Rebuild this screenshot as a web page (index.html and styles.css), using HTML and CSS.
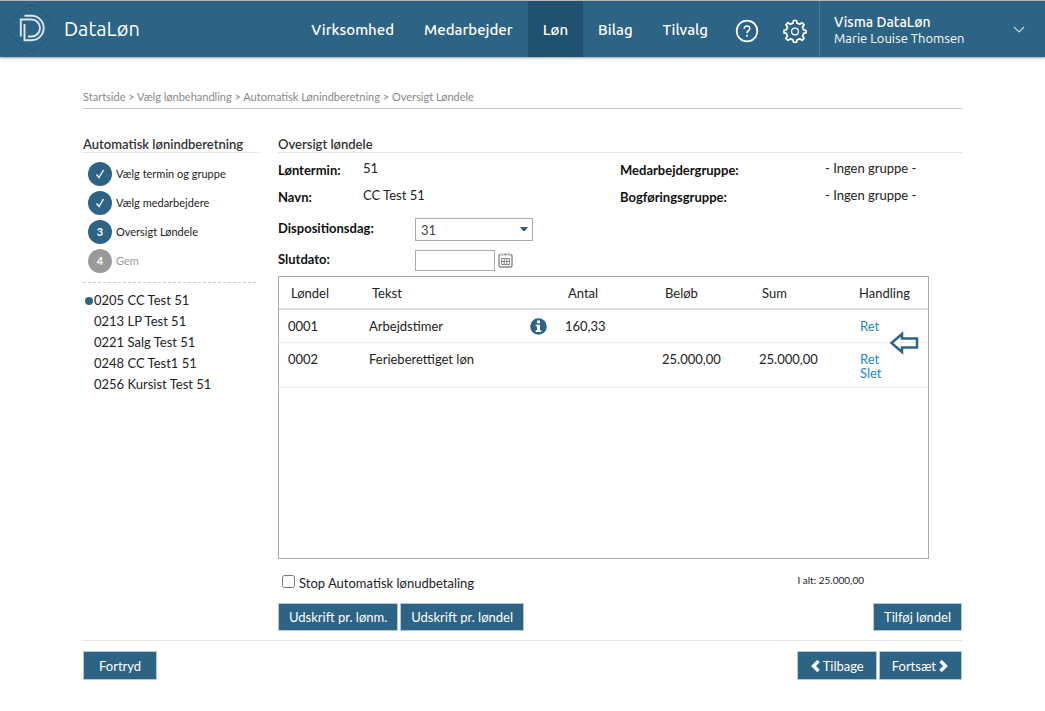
FILE: index.html
```html
<!DOCTYPE html>
<html lang="da">
<head>
    <meta charset="utf-8">
    <title>DataLøn</title>
    <link rel="stylesheet" href="styles.css">
</head>
<body>

    <header class="topbar">
        <a class="brand" href="#">
            <svg class="brand-logo" width="48" height="52" viewBox="0 0 48 52" fill="none">
                <path d="M1 19 L17 4 Q23 0 29 4 L45 19 M1 30 L17 45 Q23 50 29 45 L45 30" stroke="#24567a" stroke-width="1"/>
                <path d="M16.500 12.800H23.500A12.200 12.200 0 0 1 23.500 37.200H16.500V21" stroke="#dce7ee" stroke-width="1.900"/>
                <path d="M12.800 33.500V16.500H23.500A8.500 8.500 0 0 1 23.500 33.500H20" stroke="#dce7ee" stroke-width="1.900"/>
            </svg>
            <span>DataLøn</span>
        </a>
        <nav class="menu">
            <a href="#">Virksomhed</a>
            <a href="#">Medarbejder</a>
            <a class="active" href="#">Løn</a>
            <a href="#">Bilag</a>
            <a href="#">Tilvalg</a>
            <a class="icon-link" href="#" aria-label="Hjælp">
                <svg width="24" height="24" viewBox="0 0 24 24" fill="none" stroke="#fff">
                    <circle cx="12" cy="12" r="10.300" stroke-width="1.700"/>
                    <path d="M9.200 9.700C9.200 6.100 14.800 6.100 14.800 9.600C14.800 11.700 12 11.700 12 14.300" stroke-width="1.500"/>
                    <circle cx="12" cy="16.800" r="1" fill="#fff" stroke="none"/>
                </svg>
            </a>
            <a class="icon-link" href="#" aria-label="Indstillinger">
                <svg width="24" height="24" viewBox="0 0 24 24" fill="none" stroke="#fff" stroke-width="1.700" stroke-linejoin="round">
                    <path d="M10.500 1.500h3l.5 2.700Q15.500 4.500 16.700 5.300L19 3.700l2.100 2.100-1.600 2.300Q20.300 9.300 20.600 10.800l2.400.5v2.600l-2.400.5Q20.300 15.900 19.500 17.100l1.600 2.200L19 21.400l-2.300-1.600Q15.500 20.600 14 20.900l-.5 2.400h-3l-.5-2.400Q8.500 20.600 7.300 19.800L5 21.400l-2.100-2.100 1.600-2.200Q3.700 15.900 3.400 14.400L1 13.900v-2.600l2.400-.5Q3.700 9.300 4.500 8.100L2.900 5.800 5 3.700l2.300 1.600Q8.500 4.500 10 4.200z"/>
                    <circle cx="12" cy="12.500" r="3.400" stroke-width="1.200"/>
                </svg>
            </a>
        </nav>
        <button class="user" type="button">
            <span class="user-text">
                <span class="company">Visma DataLøn</span>
                <span class="name">Marie Louise Thomsen</span>
            </span>
            <svg width="12" height="8" viewBox="0 0 12 8" fill="none" stroke="#c5d5df" stroke-width="1.200">
                <path d="M1 1l5 5 5-5"/>
            </svg>
        </button>
    </header>

    <div class="page">
        <nav class="breadcrumb">
            <a href="#">Startside</a> &gt; <a href="#">Vælg lønbehandling</a> &gt; <a href="#">Automatisk Lønindberetning</a> &gt; <a href="#">Oversigt Løndele</a>
        </nav>

        <div class="columns">
            <aside class="sidebar">
                <h2>Automatisk lønindberetning</h2>
                <ol class="steps">
                    <li>
                        <span class="step-dot"><svg width="10" height="12" viewBox="0 0 10 12" fill="none" stroke="#fff" stroke-width="1.400"><path d="M1.500 6.500L4 9.500L8.500 2"/></svg></span>
                        Vælg termin og gruppe
                    </li>
                    <li>
                        <span class="step-dot"><svg width="10" height="12" viewBox="0 0 10 12" fill="none" stroke="#fff" stroke-width="1.400"><path d="M1.500 6.500L4 9.500L8.500 2"/></svg></span>
                        Vælg medarbejdere
                    </li>
                    <li><span class="step-dot">3</span>Oversigt Løndele</li>
                    <li class="pending"><span class="step-dot">4</span>Gem</li>
                </ol>
                <ul class="employees">
                    <li class="current"><a href="#">0205 CC Test 51</a></li>
                    <li><a href="#">0213 LP Test 51</a></li>
                    <li><a href="#">0221 Salg Test 51</a></li>
                    <li><a href="#">0248 CC Test1 51</a></li>
                    <li><a href="#">0256 Kursist Test 51</a></li>
                </ul>
            </aside>

            <main class="content">
                <h2>Oversigt løndele</h2>
                <dl class="info">
                    <dt>Løntermin:</dt><dd>51</dd>
                    <dt>Medarbejdergruppe:</dt><dd>- Ingen gruppe -</dd>
                    <dt>Navn:</dt><dd>CC Test 51</dd>
                    <dt>Bogføringsgruppe:</dt><dd>- Ingen gruppe -</dd>
                </dl>
                <div class="field">
                    <label for="dispositionsdag">Dispositionsdag:</label>
                    <select id="dispositionsdag">
                        <option>31</option>
                    </select>
                    <svg class="caret" width="8" height="5" viewBox="0 0 8 5"><path d="M0 0h8L5 4H3z" fill="#2d6384"/></svg>
                </div>
                <div class="field">
                    <label for="slutdato">Slutdato:</label>
                    <input type="text" id="slutdato">
                    <button class="calendar" type="button" aria-label="Vælg dato">
                        <svg width="15" height="15" viewBox="0 0 15 15" fill="none" stroke="#888">
                            <rect x="1" y="1.500" width="13" height="12.500" rx="1.500" stroke-width="1.400"/>
                            <path d="M4 0v3M11 0v3" stroke="#fff" stroke-width="3"/>
                            <path d="M4 0v3M11 0v3M3 5.500h9M3 8.500h9M3 11.500h9M3.500 5v7M6.200 5v7M8.800 5v7M11.500 5v7"/>
                        </svg>
                    </button>
                </div>

                <div class="table-box">
                    <table>
                        <thead>
                            <tr>
                                <th class="col-code">Løndel</th>
                                <th class="col-text">Tekst</th>
                                <th class="col-num">Antal</th>
                                <th class="col-num">Beløb</th>
                                <th class="col-sum">Sum</th>
                                <th class="col-action">Handling</th>
                            </tr>
                        </thead>
                        <tbody>
                            <tr>
                                <td>0001</td>
                                <td>
                                    <div class="text-cell">
                                        Arbejdstimer
                                        <svg width="17" height="17" viewBox="0 0 17 17">
                                            <circle cx="8.500" cy="8.500" r="8.300" fill="#2d6384"/>
                                            <path d="M7 2.500h3v2.700H7zM5.700 6.700H10v5.600h1.300V14H5.700v-1.700H7V8.400H5.700z" fill="#fff"/>
                                        </svg>
                                    </div>
                                </td>
                                <td>160,33</td>
                                <td></td>
                                <td></td>
                                <td><a href="#">Ret</a></td>
                            </tr>
                            <tr>
                                <td>0002</td>
                                <td>Ferieberettiget løn</td>
                                <td></td>
                                <td>25.000,00</td>
                                <td>25.000,00</td>
                                <td><a href="#">Ret</a><a href="#">Slet</a></td>
                            </tr>
                        </tbody>
                    </table>
                    <svg class="pointer" width="30" height="24" viewBox="0 0 30 24" fill="none" stroke="#2d6384" stroke-width="2.500">
                        <path d="M2.500 12L13 3v4.500h15v9H13V21z"/>
                    </svg>
                </div>

                <div class="summary">
                    <label><input type="checkbox"> Stop Automatisk lønudbetaling</label>
                    <span class="total">I alt: 25.000,00</span>
                </div>
                <div class="actions">
                    <button type="button">Udskrift pr. lønm.</button>
                    <button type="button">Udskrift pr. løndel</button>
                    <button class="push" type="button">Tilføj løndel</button>
                </div>
            </main>
        </div>

        <footer class="actions footer">
            <button class="wide" type="button">Fortryd</button>
            <button class="push" type="button">
                <svg width="10" height="12" viewBox="0 0 10 12" fill="none" stroke="#fff" stroke-width="3.400"><path d="M8.500 1L3.500 6l5 5"/></svg>
                Tilbage
            </button>
            <button type="button">
                Fortsæt
                <svg width="10" height="12" viewBox="0 0 10 12" fill="none" stroke="#fff" stroke-width="3.400"><path d="M1.500 1l5 5-5 5"/></svg>
            </button>
        </footer>
    </div>

</body>
</html>
```
FILE: styles.css
```css
* {
    box-sizing: border-box;
}
body {
    margin: 0;
    background-color: #fff;
    color: #222;
    font-family: Lato, sans-serif;
    font-size: 13px;
    line-height: 16px;
}
a {
    color: inherit;
    text-decoration: none;
}
button, input, select {
    font: inherit;
}
ul, ol, dl, dd, h2 {
    margin: 0;
    padding: 0;
    list-style: none;
}

/* top bar */
.topbar {
    display: flex;
    height: 57px;
    border-top: 1px solid #b5b8b6;
    background-color: #2d6384;
    color: #fff;
    font-family: Ubuntu, "Noto Sans", sans-serif;
    box-shadow: 0 1px 2px rgba(0, 0, 0, 0.4);
}
.brand {
    display: flex;
    align-items: center;
    gap: 8px;
    padding-left: 8px;
    font-size: 20px;
}
.menu {
    display: flex;
    margin-left: auto;
    font-size: 15px;
    font-weight: 500;
}
.menu a {
    display: flex;
    align-items: center;
    padding: 2px 15px 0;
}
.menu .active {
    background-color: #215170;
}
.menu .icon-link {
    padding: 4px 12px 0;
}
.user {
    display: flex;
    align-items: center;
    justify-content: space-between;
    width: 226px;
    padding: 2px 20px 0 14px;
    border: 0;
    border-left: 1px solid #4b7a97;
    background: none;
    color: #fff;
    font-size: 13px;
    text-align: left;
    cursor: pointer;
}
.user-text span {
    display: block;
}
.user .company {
    font-size: 14px;
    font-weight: 500;
}

/* page */
.page {
    padding: 32px 83px 0;
}
.breadcrumb {
    padding-bottom: 3px;
    border-bottom: 1px solid #ccc;
    color: #888;
    font-size: 11px;
}
.columns {
    display: flex;
    gap: 19px;
    margin-top: 28px;
}
h2 {
    border-bottom: 1px solid #e5e5e5;
    color: #333;
    font-size: 13px;
    font-weight: 600;
    line-height: 15px;
}
.sidebar {
    flex: 0 0 176px;
}
.steps {
    display: flex;
    flex-direction: column;
    gap: 5px;
    margin-right: 3px;
    padding: 9px 0 9px 5px;
    border-bottom: 1px dashed #ccc;
    font-size: 11px;
}
.steps li {
    display: flex;
    align-items: center;
    gap: 4px;
}
.step-dot {
    display: flex;
    align-items: center;
    justify-content: center;
    width: 24px;
    height: 24px;
    border-radius: 50%;
    background-color: #2d6384;
    color: #fff;
    font-weight: bold;
}
.steps .pending {
    color: #999;
}
.pending .step-dot {
    background-color: #999;
}
.employees {
    padding: 7px 0 0 11px;
    line-height: 21px;
}
.employees li {
    position: relative;
}
.employees .current::before {
    content: "";
    position: absolute;
    left: -9px;
    top: 7px;
    width: 8px;
    height: 8px;
    border-radius: 50%;
    background-color: #2d6384;
}
.content {
    flex: 1;
    min-width: 0;
}
.info {
    display: grid;
    grid-template-columns: 85px 257px 205px 1fr;
    row-gap: 7px;
    padding: 7px 0 11px;
    line-height: 20px;
}
.info dd {
    line-height: 16px;
}
.info dt, .field label {
    color: #111;
    font-weight: bold;
}
.field {
    display: flex;
    align-items: center;
    height: 23px;
    margin-bottom: 8px;
}
.field label {
    width: 137px;
    padding-bottom: 4px;
}
.field select, .field input {
    margin: 0;
    border: 1px solid #aaa;
    border-radius: 0;
    background-color: #fff;
    color: #444;
}
.field select {
    width: 118px;
    height: 23px;
    padding: 0 5px;
    appearance: none;
}
.field input {
    width: 80px;
    height: 21px;
}
.caret {
    margin-left: -13px;
    pointer-events: none;
}
.calendar {
    display: flex;
    margin-left: 3px;
    padding: 0;
    border: 0;
    background: none;
    cursor: pointer;
}

/* wage parts */
.table-box {
    position: relative;
    min-height: 283px;
    margin: -4px 33px 0 0;
    border: 1px solid #aaa;
}
table {
    width: 100%;
    border-collapse: collapse;
    table-layout: fixed;
}
th {
    padding: 8px 12px 7px;
    border-bottom: 2px solid #ddd;
    font-weight: normal;
    text-align: left;
}
td {
    padding: 8px 9px;
    border-bottom: 1px solid #eee;
    line-height: 16px;
    vertical-align: top;
}
td a {
    display: block;
    color: #2089cc;
    line-height: 14px;
}
.col-code {
    width: 81px;
}
.col-num {
    width: 97px;
}
.col-sum {
    width: 100px;
}
.col-action {
    width: 78px;
    padding-left: 9px;
}
td:last-child {
    padding: 9px 0 7px 10px;
}
.text-cell {
    display: flex;
    align-items: center;
    justify-content: space-between;
    height: 16px;
}
.pointer {
    position: absolute;
    top: 54px;
    right: 9px;
}
.summary {
    display: flex;
    justify-content: space-between;
    margin-top: 12px;
    padding-right: 98px;
}
.summary label {
    display: flex;
    align-items: center;
    gap: 4px;
    height: 23px;
}
.summary input {
    margin: 0 0 3px 4px;
}
.total {
    font-size: 10px;
    line-height: 18px;
}
.actions {
    display: flex;
    gap: 2px;
    margin-top: 9px;
}
.actions button {
    display: flex;
    align-items: center;
    gap: 3px;
    height: 28px;
    padding: 0 10px;
    border: 1px solid #b4c8d5;
    background-color: #2d6384;
    color: #fff;
    cursor: pointer;
}
.actions .push {
    margin-left: auto;
}
.footer {
    padding-top: 10px;
    border-top: 1px solid #e5e5e5;
}
.footer button {
    height: 29px;
    padding: 0 12px;
}
.footer .wide {
    padding: 0 15px;
}
```
